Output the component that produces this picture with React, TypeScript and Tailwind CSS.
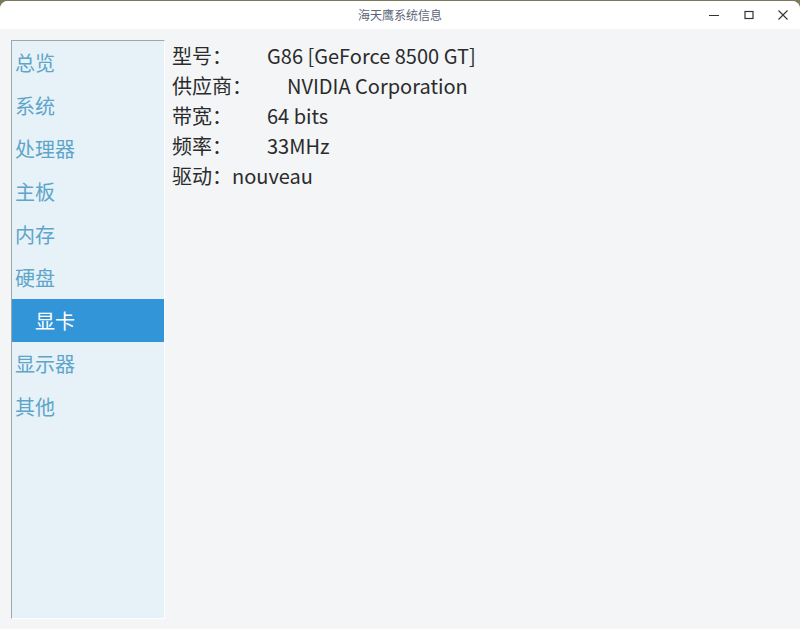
import { useState } from "react";

const navItems = ["总览", "系统", "处理器", "主板", "内存", "硬盘", "显卡", "显示器", "其他"];

const info: { label: string; value: string; gap: boolean }[] = [
    { label: "型号：", value: "G86 [GeForce 8500 GT]", gap: true },
    { label: "供应商：", value: "NVIDIA Corporation", gap: true },
    { label: "带宽：", value: "64 bits", gap: true },
    { label: "频率：", value: "33MHz", gap: true },
    { label: "驱动：", value: "nouveau", gap: false },
];

const font = { fontFamily: '"Noto Sans CJK SC", "Noto Sans", sans-serif' };

export default function App() {
    const [active, setActive] = useState("显卡");

    return (
        <div className="w-[800px] h-[629px] bg-[#7d7a5c] pt-px overflow-hidden" style={font}>
            <div className="h-full flex flex-col bg-[#f3f5f7] rounded-t-[8px] overflow-hidden">
                {/* Title bar */}
                <div className="h-[28px] bg-white flex items-center relative shrink-0">
                    <div className="flex-1 text-center text-[12px] text-[#5b6579]">海天鹰系统信息</div>
                    <div className="absolute right-0 top-0 h-full flex items-center pr-px">
                        <button className="w-[35px] h-full flex items-center justify-center" aria-label="Minimize">
                            <svg width="12" height="12" viewBox="0 0 12 12">
                                <path d="M1 6.5h10" stroke="#333" strokeWidth="1.2" />
                            </svg>
                        </button>
                        <button className="w-[35px] h-full flex items-center justify-center" aria-label="Maximize">
                            <svg width="12" height="12" viewBox="0 0 12 12">
                                <rect x="2" y="2.5" width="8" height="7" fill="none" stroke="#333" strokeWidth="1.2" />
                            </svg>
                        </button>
                        <button className="w-[33px] h-full flex items-center justify-center" aria-label="Close">
                            <svg width="12" height="12" viewBox="0 0 12 12">
                                <path d="M1.5 1.5l9 9M10.5 1.5l-9 9" stroke="#333" strokeWidth="1.1" />
                            </svg>
                        </button>
                    </div>
                </div>

                {/* Body */}
                <div className="flex-1 flex pl-[11px] pt-[11px] pb-[10px]">
                    <div className="w-[154px] bg-[#e6f2f8] border-l border-t border-l-[#a3a6a9] border-t-[#a3a6a9] border-r border-b border-r-white border-b-white">
                        {navItems.map(item => (
                            <div
                                key={item}
                                onClick={() => setActive(item)}
                                className={
                                    item === active
                                        ? "h-[43px] flex items-center pl-[23px] text-[20px] bg-[#3295d8] text-white cursor-pointer"
                                        : "h-[43px] flex items-center pl-[3px] text-[20px] text-[#5ea5c9] cursor-pointer"
                                }
                            >
                                {item}
                            </div>
                        ))}
                    </div>

                    <div className="pl-[7px] pt-px text-[20px] leading-[30px] text-[#2b2b2b]">
                        {info.map(row => (
                            <div key={row.label} className="flex">
                                <span>{row.label}</span>
                                <span className={row.gap ? "ml-[35px]" : ""}>{row.value}</span>
                            </div>
                        ))}
                    </div>
                </div>
            </div>
        </div>
    );
}
